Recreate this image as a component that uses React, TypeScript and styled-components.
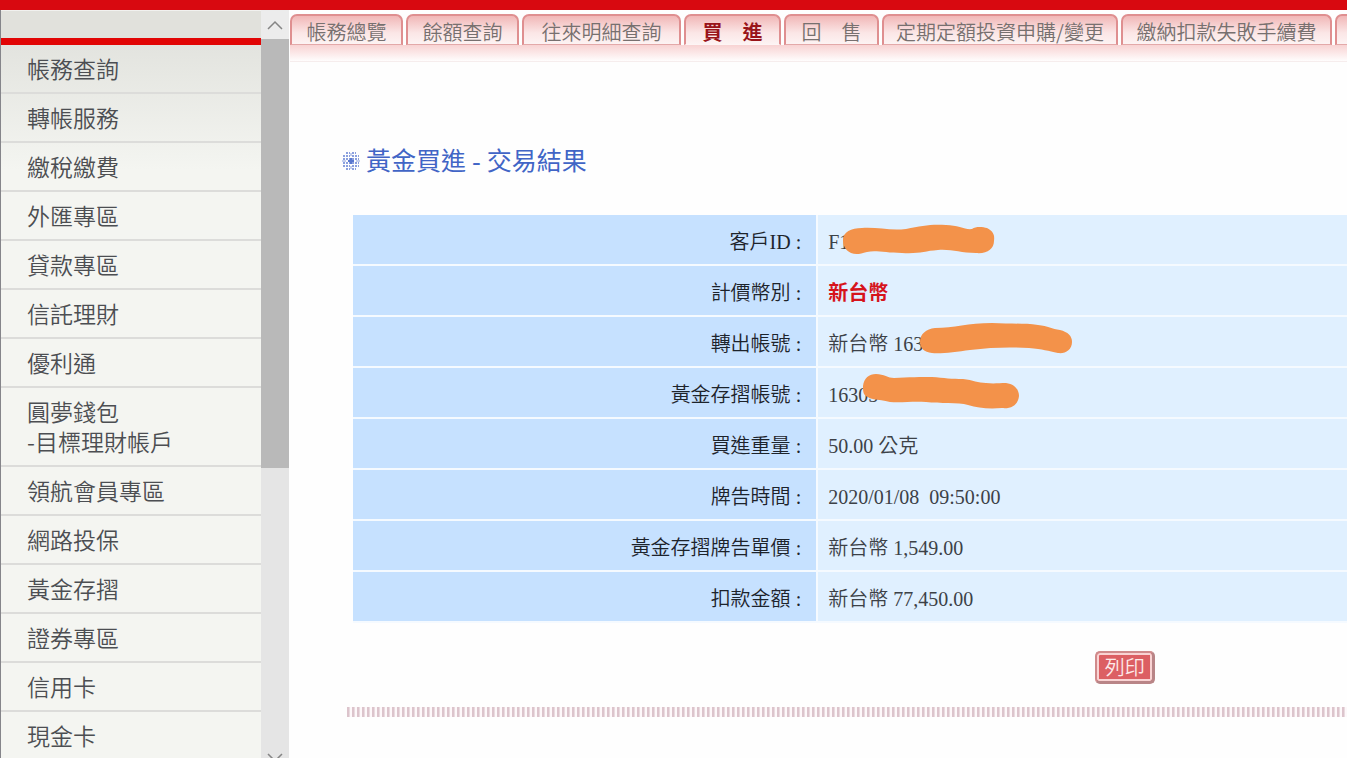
import React from "react";
import styled, { createGlobalStyle, css } from "styled-components";

const GlobalStyle = createGlobalStyle`
  * { box-sizing: border-box; }
  html, body { margin: 0; padding: 0; overflow: hidden; background: #fefefe; }
`;

const sans = `"Noto Sans CJK TC", "Noto Sans", sans-serif`;
const serif = `"Liberation Serif", "Noto Sans CJK TC", serif`;

const Page = styled.div`
  display: flex;
  flex-direction: column;
  height: 100vh;
  overflow: hidden;
  font-family: ${sans};
`;

const TopBar = styled.header`
  flex: none;
  height: 10px;
  background: #d80910;
`;

const Body = styled.div`
  display: flex;
  flex: 1;
  min-height: 0;
`;

const Sidebar = styled.nav`
  display: flex;
  flex-direction: column;
  flex: 0 0 261px;
  overflow: hidden;
  border-left: 1px solid #85858a;
  background: linear-gradient(#e2e3de 30px, #f4f5f1 160px);
`;

const SidebarHead = styled.div`
  flex: none;
  height: 35px;
  border-top: 1px solid #f1f1ef;
  border-bottom: 7px solid #e10505;
  background: #e1e1dc;
`;

const Menu = styled.ul`
  margin: 0;
  padding: 0;
  list-style: none;
`;

const MenuItem = styled.li`
  border-bottom: 2px solid #dcdcda;
`;

const MenuLink = styled.a`
  display: block;
  padding: 8px 26px 9px;
  color: #4c4e52;
  font-size: 23px;
  font-weight: 350;
  line-height: 30px;
  text-decoration: none;
  white-space: pre-line;
`;

const Scrollbar = styled.div`
  display: flex;
  flex-direction: column;
  flex: 0 0 28px;
  background: #e5e5e5;
`;

const ScrollButton = styled.button<{ $cut?: boolean }>`
  display: flex;
  justify-content: center;
  flex: none;
  width: 28px;
  height: ${(p) => (p.$cut ? 15 : 29)}px;
  padding: 10px 0 0;
  border: 0;
  overflow: hidden;
  background: ${(p) => (p.$cut ? "#e5e5e5" : "#ececec")};
`;

const ScrollTrack = styled.div`
  flex: 1;
`;

const ScrollThumb = styled.div`
  height: 61%;
  background: #b9b9b9;
`;

const Main = styled.main`
  flex: 1;
  min-width: 0;
  overflow: hidden;
`;

const Tabs = styled.div`
  display: flex;
  gap: 3px;
  padding: 4px 0 0 1px;
`;

const Tab = styled.a<{ $width: number; $active?: boolean }>`
  flex: 0 0 ${(p) => p.$width}px;
  height: 31px;
  border: 2px solid #df8f90;
  border-bottom: 1px solid #e3a9a9;
  border-radius: 7px 7px 0 0;
  background: linear-gradient(#f1b7b7, #fbe6e6 60%, #fdf3f3);
  color: #77706f;
  font-size: 20px;
  font-weight: 350;
  line-height: 31px;
  text-align: center;
  text-decoration: none;
  white-space: pre;
  ${(p) =>
    p.$active &&
    css`
      border-bottom-color: #fdf5f5;
      color: #99141a;
      font-weight: 700;
    `}
`;

const TabShade = styled.div`
  height: 17px;
  margin-left: 1px;
  border-bottom: 1px solid #f6eded;
  background: linear-gradient(#f8d3d3, #fffdfd);
`;

const Content = styled.section`
  width: 158%;
  padding: 82px 52px 0 53px;
`;

const Title = styled.h1`
  display: flex;
  align-items: center;
  gap: 6px;
  margin: 0 0 35px;
  color: #4165c6;
  font-family: ${serif};
  font-size: 25px;
  font-weight: 400;
  line-height: 36px;
`;

const TableArea = styled.div`
  padding: 0 5px 0 11px;
`;

const ResultTable = styled.table`
  width: 100%;
  border-spacing: 0;
  table-layout: fixed;
  font-family: ${serif};
  font-size: 20px;
  line-height: 29px;
`;

const Label = styled.th`
  width: 30%;
  height: 51px;
  padding: 5px 15px 0 0;
  border-right: 2px solid #f5faff;
  border-bottom: 2px solid #f5faff;
  background: #c6e1ff;
  color: #1d232b;
  font-weight: 350;
  text-align: right;
`;

const Value = styled.td<{ $strong?: boolean }>`
  position: relative;
  padding: 5px 10px 0;
  border-bottom: 2px solid #f5faff;
  background: #e0f0ff;
  color: ${(p) => (p.$strong ? "#d6141c" : "#3c4147")};
  font-weight: ${(p) => (p.$strong ? 700 : 350)};
  white-space: pre;
`;

const Marker = styled.svg`
  position: absolute;
  top: 0;
  left: 0;
  width: 300px;
  height: 51px;
`;

const Actions = styled.div`
  display: flex;
  justify-content: center;
  padding: 28px 0 23px;
`;

const PrintButton = styled.button`
  width: 60px;
  height: 33px;
  padding: 0;
  border: 2px solid #d08a8b;
  border-right: 3px solid #b98587;
  border-bottom: 3px solid #b98587;
  border-radius: 5px;
  background: #dc5f63;
  box-shadow: inset 0 0 0 2px #f9d3d3;
  color: #fdeaea;
  font-family: ${sans};
  font-size: 20px;
  font-weight: 350;
  line-height: 28px;
`;

const Divider = styled.hr`
  height: 10px;
  margin: 0 5px;
  border: 0;
  background: repeating-linear-gradient(
    90deg,
    #dcc4cc 0 2px,
    #eadbe0 2px 3px,
    #fdf8fa 3px 5px
  );
`;

const menu = [
  "帳務查詢",
  "轉帳服務",
  "繳稅繳費",
  "外匯專區",
  "貸款專區",
  "信託理財",
  "優利通",
  "圓夢錢包\n-目標理財帳戶",
  "領航會員專區",
  "網路投保",
  "黃金存摺",
  "證券專區",
  "信用卡",
  "現金卡",
];

const tabs = [
  { text: "帳務總覽", width: 113 },
  { text: "餘額查詢", width: 113 },
  { text: "往來明細查詢", width: 159 },
  { text: "買\u3000進", width: 97, active: true },
  { text: "回\u3000售", width: 95 },
  { text: "定期定額投資申購/變更", width: 236 },
  { text: "繳納扣款失敗手續費", width: 211 },
  { text: "", width: 113 },
];

type Row = { label: string; value: string; strong?: boolean; marker?: string };

const rows: Row[] = [
  {
    label: "客戶ID",
    value: "F1",
    marker:
      "M25 25C25 17 33 13 44 13C60 12 72 16 88 14C104 11 112 9 128 10C140 10 147 15 154 14C158 11 165 12 169 13C175 16 177 20 176 26C176 34 169 39 158 38C142 38 134 34 120 35C106 36 102 39 84 38C68 38 58 35 49 37C42 39 38 40 33 38C27 35 25 30 25 25Z",
  },
  { label: "計價幣別", value: "新台幣", strong: true },
  {
    label: "轉出帳號",
    value: "新台幣 163",
    marker:
      "M102 25C102 17 108 12 117 11C136 11 150 6 174 6C192 7 206 6 220 8C230 9 234 12 242 13C250 15 254 19 254 25C254 33 247 37 240 36C230 34 225 32 211 31C195 30 174 30 152 33C138 35 122 37 114 36C106 35 102 31 102 25Z",
  },
  {
    label: "黃金存摺帳號",
    value: "16305",
    marker:
      "M45 18C46 10 51 6 58 6C66 6 70 10 76 10C90 9 104 9 114 9C126 10 134 11 145 11C155 12 160 15 168 15C176 16 181 15 188 15C197 16 201 22 201 28C200 37 193 41 184 40C170 41 160 40 150 37C140 34 122 36 108 34C94 33 84 35 72 34C60 31 50 32 46 26C45 24 45 21 45 18Z",
  },
  { label: "買進重量", value: "50.00 公克" },
  { label: "牌告時間", value: "2020/01/08  09:50:00" },
  { label: "黃金存摺牌告單價", value: "新台幣 1,549.00" },
  { label: "扣款金額", value: "新台幣 77,450.00" },
];

const Chevron = ({ down }: { down?: boolean }) => (
  <svg width="16" height="10" viewBox="0 0 16 10" fill="none" stroke="#858585" strokeWidth="1.5">
    <path d={down ? "M1 1L8 8L15 1" : "M1 9L8 2L15 9"} />
  </svg>
);

const Snowflake = () => (
  <svg width="18" height="20" viewBox="0 0 18 20" fill="none" stroke="#8ba0de" strokeWidth="2">
    <path
      strokeDasharray="2 1"
      d="M4 1H8M10 1H14M1 4H8M10 4H17M1 7H8M10 7H17M1 11H8M10 11H17M1 14H8M10 14H17M4 17H8M10 17H14"
    />
    <path d="M9 6V12M6 9H12" stroke="#5a78d0" />
    <path d="M9 1V4M9 14V17M0 9H4M14 9H18" strokeWidth="1" />
  </svg>
);

export default function App() {
  return (
    <Page>
      <GlobalStyle />
      <TopBar />
      <Body>
        <Sidebar>
          <SidebarHead />
          <Menu>
            {menu.map((text) => (
              <MenuItem key={text}>
                <MenuLink href="#">{text}</MenuLink>
              </MenuItem>
            ))}
          </Menu>
        </Sidebar>
        <Scrollbar>
          <ScrollButton aria-label="向上捲動">
            <Chevron />
          </ScrollButton>
          <ScrollTrack>
            <ScrollThumb />
          </ScrollTrack>
          <ScrollButton $cut aria-label="向下捲動">
            <Chevron down />
          </ScrollButton>
        </Scrollbar>
        <Main>
          <Tabs>
            {tabs.map((t) => (
              <Tab key={t.text} href="#" $width={t.width} $active={t.active}>
                {t.text}
              </Tab>
            ))}
          </Tabs>
          <TabShade />
          <Content>
            <Title>
              <Snowflake />
              黃金買進 - 交易結果
            </Title>
            <TableArea>
              <ResultTable>
                <tbody>
                  {rows.map((r) => (
                    <tr key={r.label}>
                      <Label scope="row">{r.label} :</Label>
                      <Value $strong={r.strong}>
                        {r.value}
                        {r.marker && (
                          <Marker viewBox="0 0 300 51" aria-hidden="true">
                            <path d={r.marker} fill="#f3924a" />
                          </Marker>
                        )}
                      </Value>
                    </tr>
                  ))}
                </tbody>
              </ResultTable>
            </TableArea>
            <Actions>
              <PrintButton type="button">列印</PrintButton>
            </Actions>
            <Divider />
          </Content>
        </Main>
      </Body>
    </Page>
  );
}
